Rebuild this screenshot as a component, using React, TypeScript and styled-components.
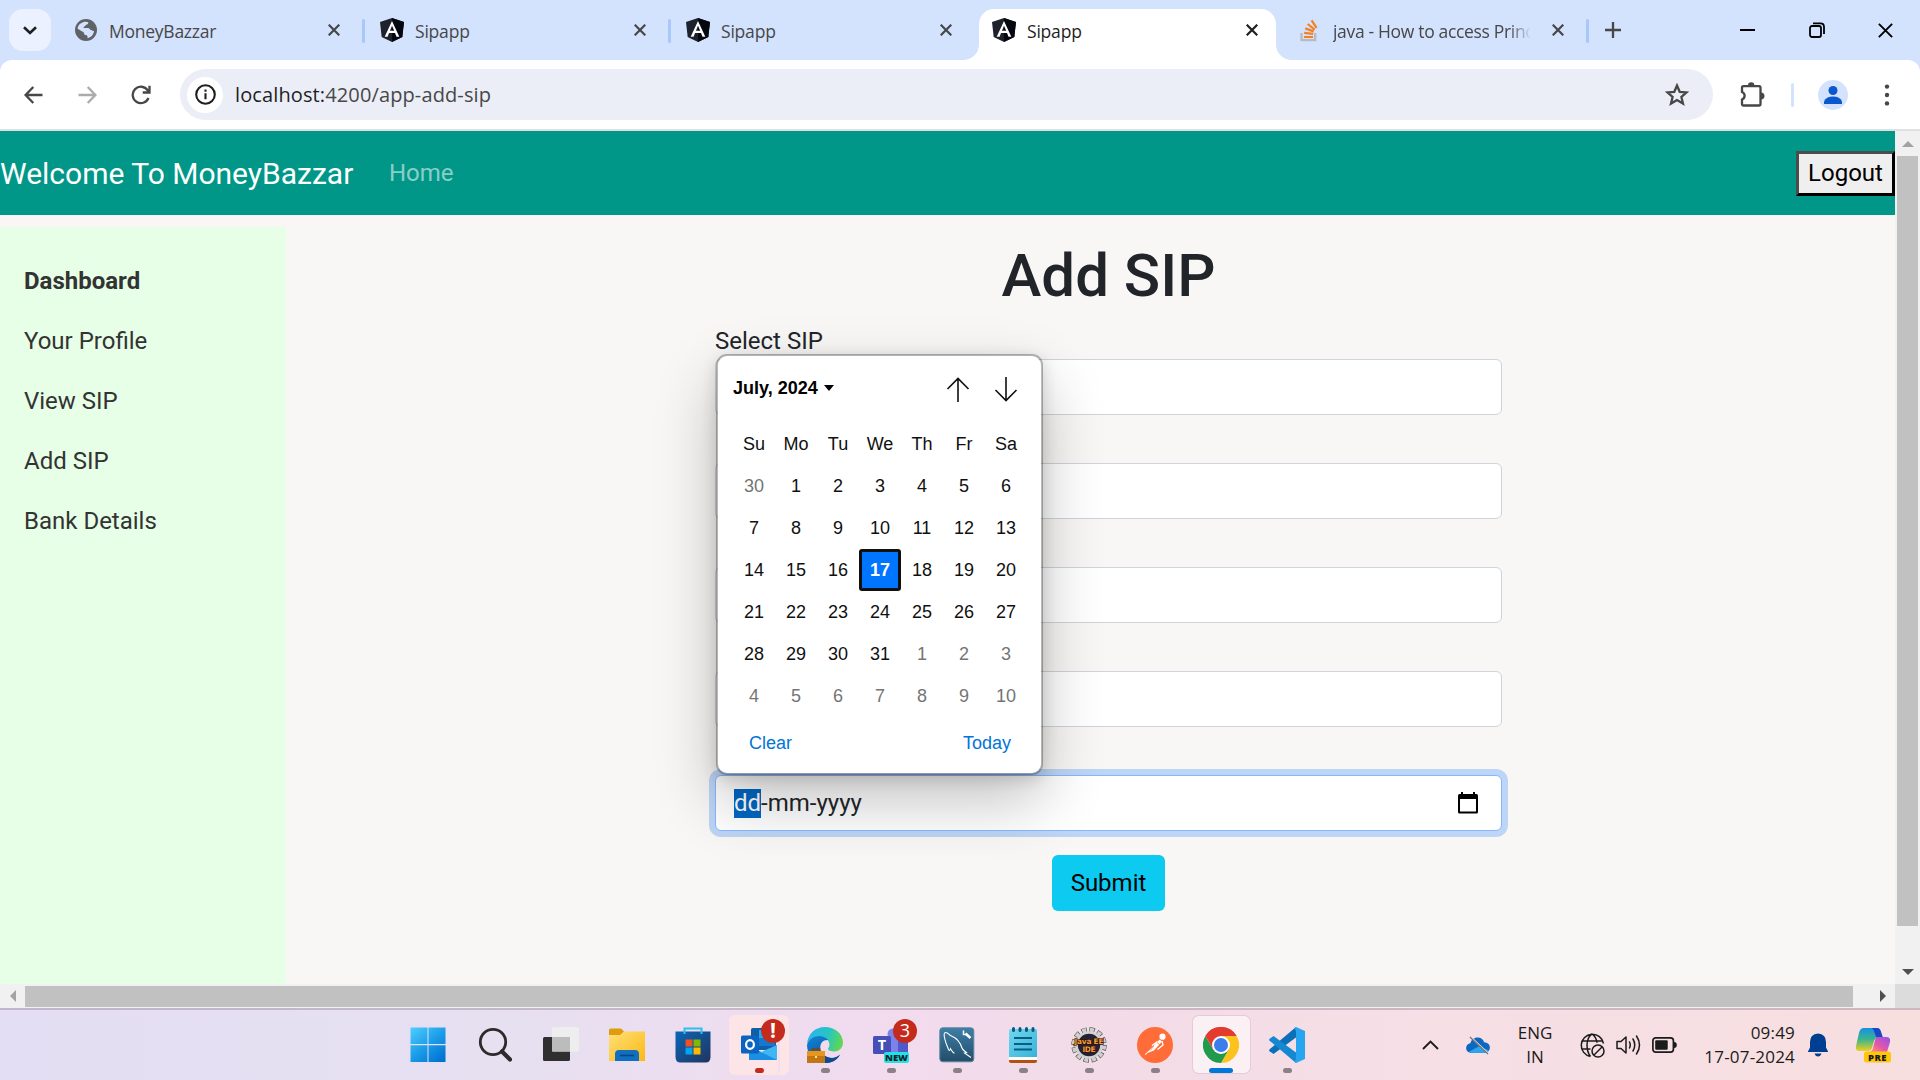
import React from "react";
import styled, { createGlobalStyle, css } from "styled-components";

const Global = createGlobalStyle`
  * { box-sizing: border-box; }
  html, body { margin: 0; padding: 0; overflow: hidden; }
  body { font-family: "Roboto", "Liberation Sans", sans-serif; }
  svg { display: block; flex: none; }
`;

const ui = `"Open Sans", "Noto Sans", sans-serif`;

const Screen = styled.div`
  width: 1920px;
  height: 1080px;
  display: flex;
  flex-direction: column;
  overflow: hidden;
  background: #d3e2fd;
`;

/* ---------- browser tab strip ---------- */
const TabStrip = styled.div`
  height: 60px;
  flex: none;
  display: flex;
  background: #d3e2fd;
`;
const TabSearch = styled.div`
  width: 42px;
  height: 42px;
  margin: 9px 7px 0 9px;
  border-radius: 14px;
  background: #ebf1fe;
  display: grid;
  place-items: center;
`;
const Tab = styled.div<{ $active?: boolean; $line?: boolean }>`
  position: relative;
  width: 306px;
  height: 60px;
  padding: 0 19px 0 16px;
  display: flex;
  align-items: center;
  color: ${(p) => (p.$active ? "#1f1f1f" : "#474747")};
  ${(p) =>
    p.$line &&
    css`
      &::after {
        content: "";
        position: absolute;
        right: -1px;
        top: 19px;
        width: 3px;
        height: 24px;
        border-radius: 2px;
        background: #a8c7fa;
      }
    `}
`;
const ActiveShape = styled.div`
  position: absolute;
  left: 3px;
  right: 6px;
  top: 9px;
  bottom: 0;
  background: #fff;
  border-radius: 15px 15px 0 0;
  &::before,
  &::after {
    content: "";
    position: absolute;
    bottom: 0;
    width: 15px;
    height: 15px;
  }
  &::before {
    left: -15px;
    background: radial-gradient(circle at 0 0, transparent 14.5px, #fff 15px);
  }
  &::after {
    right: -15px;
    background: radial-gradient(circle at 100% 0, transparent 14.5px, #fff 15px);
  }
`;
const TabIcon = styled.div`
  position: relative;
  width: 24px;
  height: 24px;
  margin-right: 11px;
  display: grid;
  place-items: center;
`;
const TabTitle = styled.div<{ $fade?: boolean; $track: number }>`
  position: relative;
  flex: 1;
  margin-right: 14px;
  overflow: hidden;
  white-space: nowrap;
  font: 400 17.5px/26px ${ui};
  letter-spacing: ${(p) => p.$track}px;
  padding-top: 2px;
  ${(p) => p.$fade && css`mask-image: linear-gradient(90deg, #000 88%, transparent 99%);`}
`;
const TabClose = styled.div`
  position: relative;
  width: 22px;
  display: grid;
  place-items: center;
`;
const NewTab = styled.div`
  width: 50px;
  height: 60px;
  display: grid;
  place-items: center;
`;
const WindowButtons = styled.div`
  margin-left: auto;
  display: flex;
  height: 60px;
`;
const WindowButton = styled.div`
  width: 69px;
  height: 60px;
  display: grid;
  place-items: center;
`;

/* ---------- browser toolbar ---------- */
const Toolbar = styled.div`
  height: 71px;
  flex: none;
  background: #fff;
  border-bottom: 2px solid #dfe0e2;
  border-radius: 12px 12px 0 0;
  display: flex;
  align-items: center;
  padding-left: 6px;
`;
const ToolButton = styled.div<{ $w?: number }>`
  width: ${(p) => p.$w ?? 54}px;
  height: 51px;
  display: grid;
  place-items: center;
`;
const AddressBar = styled.div`
  width: 1533px;
  height: 51px;
  margin-left: 12px;
  border-radius: 26px;
  background: #ebeef7;
  display: flex;
  align-items: center;
  padding: 0 24px 0 7px;
`;
const SiteInfo = styled.div`
  width: 36px;
  height: 36px;
  border-radius: 50%;
  background: #fff;
  display: grid;
  place-items: center;
`;
const Url = styled.div`
  flex: 1;
  margin-left: 12px;
  font: 400 20px/28px ${ui};
  letter-spacing: 0.12px;
  color: #474747;
  b { font-weight: 400; color: #1f1f1f; }
`;
const ToolDivider = styled.div`
  width: 3px;
  height: 24px;
  border-radius: 2px;
  background: #d3e2fd;
`;
const Avatar = styled.div`
  width: 30px;
  height: 30px;
  border-radius: 50%;
  background: #d3e2fd;
  display: grid;
  place-items: center;
`;

/* ---------- page ---------- */
const Viewport = styled.div`
  flex: 1;
  min-height: 0;
  display: grid;
  grid-template: 853px 24px / 1895px 25px;
`;
const Page = styled.div`
  background: #f8f7f5;
  display: flex;
  flex-direction: column;
  overflow: hidden;
`;
const Navbar = styled.nav`
  height: 84px;
  flex: none;
  background: #009788;
  display: flex;
  align-items: center;
`;
const Brand = styled.div`
  width: 389px;
  font-size: 30px;
  line-height: 45px;
  color: #fff;
`;
const NavLink = styled.a`
  flex: 1;
  font-size: 24px;
  line-height: 36px;
  color: rgba(255, 255, 255, 0.55);
`;
const Logout = styled.button`
  width: 99px;
  height: 45px;
  padding: 0 0 2px;
  margin-top: 1px;
  font: 400 24px/36px "Roboto", sans-serif;
  color: #000;
  background: #efefef;
  border: 3px solid;
  border-color: #4c4c4c #000 #000 #4c4c4c;
`;
const Columns = styled.div`
  flex: 1;
  display: flex;
  min-height: 0;
`;
const Sidebar = styled.aside`
  width: 286px;
  margin-top: 12px;
  padding: 24px 24px 0;
  background: #e6ffe6;
`;
const SideItem = styled.div<{ $bold?: boolean }>`
  height: 60px;
  line-height: 60px;
  font-size: 24px;
  color: #333;
  font-weight: ${(p) => (p.$bold ? 700 : 400)};
`;
const Form = styled.form`
  width: 787px;
  margin: 24px 0 0 429px;
  display: flex;
  flex-direction: column;
`;
const Title = styled.h1`
  margin: 0 0 12px;
  padding-top: 1px;
  height: 72px;
  font-size: 60px;
  line-height: 72px;
  font-weight: 500;
  text-align: center;
  color: #212529;
`;
const Field = styled.div`
  position: relative;
  margin-bottom: 12px;
`;
const Label = styled.div`
  height: 36px;
  font-size: 24px;
  line-height: 36px;
  color: #212529;
`;
const Input = styled.div<{ $focus?: boolean }>`
  height: 56px;
  border: 1px solid ${(p) => (p.$focus ? "#86b7fe" : "#ced4da")};
  border-radius: 6px;
  background: #fff;
  padding: 0 23px 0 18px;
  display: flex;
  align-items: center;
  justify-content: space-between;
  font-size: 24px;
  color: #212529;
  box-shadow: ${(p) => (p.$focus ? "0 0 0 6px rgba(13,110,253,.25)" : "none")};
`;
const DateText = styled.div`
  line-height: 29px;
`;
const DayPart = styled.span`
  display: inline-block;
  background: #0067c5;
  color: #fff;
`;
const Submit = styled.button`
  align-self: center;
  margin-top: 12px;
  width: 113px;
  height: 56px;
  padding: 0;
  border: 0;
  border-radius: 6px;
  background: #0dcaf0;
  color: #000;
  font: 400 24px/36px "Roboto", sans-serif;
`;

/* ---------- date picker popup ---------- */
const Picker = styled.div`
  position: absolute;
  left: 1px;
  bottom: 56px;
  z-index: 2;
  width: 327px;
  height: 421px;
  padding: 11px 15px 0;
  border: 2px solid rgba(0, 0, 0, 0.27);
  border-radius: 11px;
  background: #fff;
  background-clip: padding-box;
  box-shadow: 0 26px 62px rgba(0, 0, 0, 0.24), 0 4px 16px rgba(0, 0, 0, 0.14);
  font: 400 18px/42px "Liberation Sans", Arial, sans-serif;
  color: #101010;
`;
const PickerHead = styled.div`
  height: 56px;
  margin-right: -4px;
  display: flex;
  align-items: flex-start;
`;
const Month = styled.div`
  flex: 1;
  display: flex;
  align-items: center;
  gap: 6px;
  font-weight: 700;
  color: #000;
`;
const MonthArrow = styled.div`
  width: 48px;
  height: 44px;
  display: grid;
  place-items: center;
`;
const Days = styled.div`
  display: grid;
  grid-template-columns: repeat(7, 42px);
  grid-auto-rows: 42px;
  text-align: center;
`;
const Day = styled.div<{ $dim?: boolean; $selected?: boolean }>`
  color: ${(p) => (p.$dim ? "#757575" : "#101010")};
  ${(p) =>
    p.$selected &&
    css`
      color: #fff;
      font-weight: 700;
      line-height: 36px;
      background: #0075ff;
      border: 3px solid #101010;
      border-radius: 3px;
    `}
`;
const PickerFoot = styled.div`
  display: flex;
  justify-content: space-between;
  padding: 6px 15px 0 16px;
  line-height: 40px;
  color: #0075d7;
`;

/* ---------- scrollbars ---------- */
const VBar = styled.div`
  background: #f1f1f1;
  display: flex;
  flex-direction: column;
  align-items: center;
`;
const HBar = styled.div`
  background: #f1f1f1;
  display: flex;
  align-items: center;
`;
const ScrollEnd = styled.div`
  width: 25px;
  height: 25px;
  display: grid;
  place-items: center;
`;
const VThumb = styled.div`
  width: 21px;
  height: 770px;
  margin-bottom: 33px;
  background: #c1c1c1;
`;
const HThumb = styled.div`
  width: 1828px;
  height: 21px;
  margin-right: 17px;
  background: #c1c1c1;
`;
const Corner = styled.div`
  background: #dcdcdc;
`;

/* ---------- taskbar ---------- */
const Taskbar = styled.div`
  height: 72px;
  flex: none;
  border-top: 2px solid rgba(120, 100, 120, 0.32);
  background: linear-gradient(90deg, #e3def3 0, #e6e0f1 500px, #f1dbee 860px, #f3dce6 1150px, #f6dfe5 1450px, #f7dfe0 1920px);
  display: flex;
  align-items: center;
  padding-left: 396px;
`;
const TaskApp = styled.div`
  position: relative;
  width: 66px;
  height: 70px;
  display: grid;
  place-items: center;
  padding-bottom: 1px;
`;
const Tile = styled.div<{ $alert?: boolean }>`
  position: relative;
  width: ${(p) => (p.$alert ? 60 : 57)}px;
  height: ${(p) => (p.$alert ? 60 : 57)}px;
  border-radius: 6px;
  display: grid;
  place-items: center;
  background: ${(p) => (p.$alert ? "#fde5e7" : "rgba(255,255,255,.6)")};
  box-shadow: ${(p) => (p.$alert ? "none" : "0 0 0 1px rgba(160,120,140,.18)")};
  ${(p) =>
    p.$alert &&
    css`
      &::before {
        content: "";
        position: absolute;
        inset: 0 9px 0 0;
        border-right: 2px solid #f4dcea;
        border-radius: 6px;
      }
    `}
`;
const Mark = styled.div<{ $color: string; $w: number }>`
  position: absolute;
  bottom: 7px;
  left: 50%;
  width: ${(p) => p.$w}px;
  height: 5px;
  margin-left: ${(p) => -p.$w / 2}px;
  border-radius: 3px;
  background: ${(p) => p.$color};
`;
const Badge = styled.div<{ $bold?: boolean }>`
  position: absolute;
  left: 35px;
  top: 9px;
  width: 24px;
  height: 24px;
  border-radius: 50%;
  background: #c42b1c;
  color: #fff;
  text-align: center;
  font: ${(p) => (p.$bold ? "700 21px/22px" : "400 18px/23px")} ${ui};
`;
const Tray = styled.div`
  margin-left: auto;
  height: 70px;
  display: flex;
  align-items: center;
  color: #1b1b1b;
  font: 400 17px/24px ${ui};
`;
const TrayItem = styled.div<{ $w: number; $left?: number; $right?: number }>`
  width: ${(p) => p.$w}px;
  margin-left: ${(p) => p.$left ?? 0}px;
  margin-right: ${(p) => p.$right ?? 0}px;
  display: grid;
  place-items: center;
`;
const Lang = styled.div`
  width: 90px;
  text-align: center;
`;
const Clock = styled.div`
  width: 118px;
  text-align: right;
  letter-spacing: 0.2px;
`;

/* ---------- drawings ---------- */
const Cross = ({ s = 12, w = 2.2, c = "#474747" }) => (
  <svg width={s} height={s} viewBox="0 0 12 12" fill="none" stroke={c} strokeWidth={w}>
    <path d="M.7.7 11.3 11.3M11.3.7.7 11.3" />
  </svg>
);
const Angular = () => (
  <svg width="24" height="24" viewBox="0 0 24 24">
    <path d="M12 0 24 4 22.3 19 12 24 1.7 19 0 4Z" fill="#1d222c" />
    <path d="M12 0 24 4 22.3 19 12 24Z" fill="#05080f" />
    <path d="M12 3 4.7 18.7h2.9L9 15h6l1.500 3.700h2.800ZM12 7.700 14.200 12.800H9.900Z" fill="#fff" fillRule="evenodd" />
  </svg>
);
const Earth = () => (
  <svg width="22" height="22" viewBox="0 0 22 22">
    <circle cx="11" cy="11" r="11" fill="#5f6368" />
    <path d="M8 3.200c2-.8 4-.6 5.300 0 .2 1.500-.8 2.500-2.300 2.500-.3 1.800-2.500 1.300-2.500 3.200h4.600c1.500 0 1.700 2 3 2.200 1.300.1 1.500 1.200 3 1-.5 3.500-3 6.500-6.600 7.200.4-1.700-.3-3-1.900-3.200-1.900-.3-1.200-2.600-2.700-3.400C5.500 11.400 4 10.400 2.500 9.400 3.100 6.300 5 4.200 8 3.200Z" fill="#d3e2fd" />
    <path d="M13.500 3.500c3.200 1 5.200 3.600 5.700 6.500-1.800.2-2.300-1.300-3.700-1.500-1.700-.3-2.500-1.600-1.300-2.700.6-.6-.6-1.400-.7-2.300Z" fill="#5f6368" />
  </svg>
);
const StackOverflow = () => (
  <svg width="20" height="24" viewBox="0 0 20 24" fill="none">
    <path d="M1.500 15v7.200h13.700V15" stroke="#bcbbbb" strokeWidth="2.300" />
    <g stroke="#f48024" strokeWidth="2.200">
      <path d="M4 19h9M4.200 14.800l9 1M5.200 10.400l8.500 3M7.700 6l7 5.600M11.600 2.300l5 7.500" />
    </g>
  </svg>
);
const Calendar = () => (
  <svg width="20" height="22" viewBox="0 0 20 22">
    <path d="M3 0h2v2h10V0h2v2h1.500Q20 2 20 4v16q0 1.500-1.500 1.500h-17Q0 21.500 0 20V4q0-2 1.500-2H3ZM2 7v12.500h16V7Z" fill="#000" fillRule="evenodd" />
  </svg>
);
const Tri = ({ d, c }: { d: string; c: string }) => (
  <svg width="12" height="12" viewBox="0 0 12 12">
    <path d={d} fill={c} />
  </svg>
);

const WindowsSvg = styled.svg`
  margin-right: 3px;
`;
const Windows = () => (
  <WindowsSvg width="36" height="36" viewBox="0 0 36 36">
    <defs>
      <linearGradient id="win" gradientUnits="userSpaceOnUse" x1="0" y1="0" x2="30" y2="36">
        <stop stopColor="#4fd0ff" /><stop offset=".55" stopColor="#1a9be8" /><stop offset="1" stopColor="#0072d0" />
      </linearGradient>
    </defs>
    <path d="M1 .5h16.500V17H.5V1ZM18.500.5h17V17h-17ZM.5 18.300h17V35H.5ZM18.500 18.300h17V35h-17Z" fill="url(#win)" />
  </WindowsSvg>
);
const Search = () => (
  <svg width="34" height="36" viewBox="0 0 34 36" fill="none" stroke="#2b2b2b">
    <circle cx="15" cy="15" r="12.700" strokeWidth="2.800" />
    <path d="m24 24.500 8 8" strokeWidth="4.200" strokeLinecap="round" />
  </svg>
);
const TaskView = () => (
  <svg width="36" height="36" viewBox="0 0 36 36">
    <rect x="0" y="10" width="27" height="24" rx="1.500" fill="#2f2f2f" />
    <rect x="9" y="0" width="27" height="24.500" rx="1.500" fill="#efeeee" />
    <path d="M9 10h18v14.500H9Z" fill="#bdbcbd" />
  </svg>
);
const Folder = () => (
  <svg width="36" height="36" viewBox="0 0 36 36">
    <defs><linearGradient id="fo" x2="1" y2="1"><stop stopColor="#ffe07a" /><stop offset="1" stopColor="#fdb813" /></linearGradient></defs>
    <path d="M0 3q0-1.500 1.500-1.500H12l3 3-3 6H0Z" fill="#df9c0c" />
    <path d="M0 8h11l4-3.500h21V34H0Z" fill="url(#fo)" />
    <path d="M6 34V27q0-4 4-4h16q4 0 4 4v7Z" fill="#0f6fc0" />
    <path d="M11 28.500h14" stroke="#07457f" strokeWidth="1.600" />
  </svg>
);
const Store = () => (
  <svg width="36" height="36" viewBox="0 0 36 36">
    <defs><linearGradient id="st" x2="1" y2="1"><stop stopColor="#0a66b8" /><stop offset="1" stopColor="#20345f" /></linearGradient></defs>
    <path d="M.5 4.500h35V30q0 5.500-5 5.500h-25q-5 0-5-5.500Z" fill="url(#st)" />
    <path d="M9.500 7V1.500h17V7" stroke="#2cc0f0" strokeWidth="2" fill="none" />
    <path d="M10.500 12.500h7v7h-7Z" fill="#f25022" /><path d="M18.500 12.500h7v7h-7Z" fill="#7fba00" />
    <path d="M10.500 20.500h7v7h-7Z" fill="#00a4ef" /><path d="M18.500 20.500h7v7h-7Z" fill="#ffb900" />
  </svg>
);
const Outlook = () => (
  <svg width="36" height="36" viewBox="0 0 36 36">
    <rect x="10" y="1" width="25" height="22" rx="1.500" fill="#0f5ea8" />
    <path d="M18 3h8v8h-8Z" fill="#28a8ea" /><path d="M26 11h8v8h-8ZM18 11h8v8h-8Z" fill="#1478cf" />
    <path d="M8 18 22 26 36 18V33H8Z" fill="#1a8fe3" /><path d="M36 18v15L20 25Z" fill="#3fb5f3" />
    <rect x="0" y="8.500" width="18" height="18" rx="1.500" fill="#0b64c0" />
    <ellipse cx="9" cy="17.500" rx="3.900" ry="4.300" fill="none" stroke="#fff" strokeWidth="2.200" />
  </svg>
);
const Edge = () => (
  <svg width="36" height="36" viewBox="0 0 36 36">
    <defs>
      <linearGradient id="e1" x1="0" y1=".3" x2="1" y2=".5"><stop stopColor="#2ab4f0" /><stop offset=".55" stopColor="#26c4c6" /><stop offset="1" stopColor="#62d84e" /></linearGradient>
      <linearGradient id="e2" x2=".6" y2="1"><stop stopColor="#1187d8" /><stop offset="1" stopColor="#0b4a9c" /></linearGradient>
    </defs>
    <path d="M0 17C1 6.500 8.500 0 18 0c10 0 18 7 18 15.500 0 6-4.500 9-9 9-3.500 0-6-1-6-2.500 0-1.300 1.400-1.700 1.400-4.300C22.400 13 18 9.500 12 9.500 6 9.500 2 12.500 0 17Z" fill="url(#e1)" />
    <path d="M0 18c1.500-5.500 6-9 12-9 4 0 7.500 1.700 9.300 4-5-.5-8 2.700-8 7.500 0 6 5 10.500 11.700 10.500 3 0 5.500-1 8-3-3 5-8 8-15 8C8 36 0 28 0 18Z" fill="url(#e2)" />
    <path d="M13.800 22c1 5.500 5.700 9 11.200 9 3 0 5.500-1.500 8-3.500-3 5.500-8 8.500-15 8.500Z" fill="#104a93" />
    <rect x="0" y="24" width="18" height="12" fill="#c27613" /><path d="M0 24h18v5H0Z" fill="#e9951c" />
    <path d="M5.500 24v-2h7v2" stroke="#7a4510" strokeWidth="1.500" fill="none" /><path d="M8 29h2v2H8Z" fill="#ffe08a" />
  </svg>
);
const Teams = () => (
  <svg width="36" height="36" viewBox="0 0 36 36">
    <circle cx="20" cy="7" r="5.500" fill="#7b83eb" />
    <rect x="14" y="12" width="13" height="22" rx="3" fill="#7b83eb" />
    <rect x="25" y="12" width="10" height="16" rx="3" fill="#5059c9" />
    <rect x="0" y="9" width="18" height="18" rx="1.500" fill="#464eb8" />
    <text x="9" y="23" textAnchor="middle" fontFamily="Open Sans" fontWeight="700" fontSize="14.500" fill="#fff">T</text>
    <rect x="11" y="25" width="25" height="11" rx="2" fill="#27e0e4" />
    <text x="23.500" y="34" textAnchor="middle" fontFamily="Open Sans" fontWeight="800" fontSize="9.500" fill="#06272b">NEW</text>
  </svg>
);
const MySql = () => (
  <svg width="36" height="36" viewBox="0 0 36 36">
    <defs><linearGradient id="my" x2="0" y2="1"><stop stopColor="#3e7ea8" /><stop offset="1" stopColor="#234d69" /></linearGradient></defs>
    <rect x=".8" y=".8" width="34" height="34" rx="3" fill="url(#my)" stroke="#5d87a0" strokeWidth="1" />
    <path d="M6 12.500C5 9 4.500 5.500 6.500 5.500c3 0 3.500 2.500 6 3.500 6 2.500 9 7 10.500 12 .6 2 2.500 3 4.500 4.500L25.500 26l6.500 4.500M6 12.500c.7 4 2 5.500 3.500 10 .8 1.500 1.600 1 2-.8 1.500 2.300 1.600 3.800 4 4.500" stroke="#fff" strokeWidth="1.100" fill="none" />
    <path d="m26.500 6.500 5 4.500" stroke="#fff" strokeWidth="2.600" fill="none" />
    <path d="M24.500 3.500v4h4" stroke="#fff" strokeWidth="1.500" fill="none" />
  </svg>
);
const Notepad = () => (
  <svg width="30" height="36" viewBox="0 0 30 36">
    <defs><linearGradient id="no" x2="1" y2="1"><stop stopColor="#72d8ef" /><stop offset="1" stopColor="#38b2d8" /></linearGradient></defs>
    <path d="M1 31h28v3q0 2-2 2H3q-2 0-2-2Z" fill="#b4510f" /><path d="M1 29h28v4H1Z" fill="#fff" />
    <path d="M1 4q0-2 2-2h24q2 0 2 2v26H1Z" fill="url(#no)" />
    <path d="M6 11h18M6 17h18M6 22.500h18" stroke="#075e84" strokeWidth="2" />
    <path d="M5.500 1.500v2M12 1.500v2M18.500 1.500v2M25 1.500v2" stroke="#0a5b80" strokeWidth="3" strokeLinecap="round" />
  </svg>
);
const JavaIde = () => (
  <svg width="36" height="36" viewBox="0 0 36 36">
    <circle cx="18" cy="18" r="15.200" fill="none" stroke="#4a4a4a" strokeWidth="5" strokeDasharray="5.200 2.760" />
    <circle cx="18" cy="18" r="15.200" fill="none" stroke="#cfcfcf" strokeWidth="4" strokeDasharray="4 3.960" strokeDashoffset="-.6" />
    <circle cx="18" cy="18" r="12.500" fill="#272033" stroke="#d2d2d2" strokeWidth="2.600" />
    <text x="18" y="17" textAnchor="middle" fontFamily="DejaVu Sans" fontWeight="700" fontSize="7.500" textLength="29" fill="#f59a3c" stroke="#2a1608" strokeWidth="1.300" paintOrder="stroke">Java EE</text>
    <text x="18" y="24.500" textAnchor="middle" fontFamily="DejaVu Sans" fontWeight="700" fontSize="7.500" textLength="13" fill="#f59a3c" stroke="#2a1608" strokeWidth="1" paintOrder="stroke">IDE</text>
  </svg>
);
const Postman = () => (
  <svg width="36" height="36" viewBox="0 0 36 36">
    <circle cx="18" cy="18" r="18" fill="#ff6c37" />
    <circle cx="25.500" cy="9.700" r="3.100" fill="#fff" />
    <path d="M22.500 12.500 25 14.500 17 23.500 10.500 26 8.500 28 7.800 27.300 11.500 24Z" fill="#fff" />
    <path d="m25 14 1 4-5.500 4.500M20.500 14.500 15 18.500" stroke="#fff" strokeWidth="1.300" fill="none" />
    <path d="m13 23.500 4-4.500M20 15.500l3 2.500" stroke="#ff6c37" strokeWidth=".7" />
  </svg>
);
const ChromeLogo = () => (
  <svg width="36" height="36" viewBox="0 0 36 36">
    <path d="M18 18 2.400 9A18 18 0 0 1 33.600 9Z" fill="#e33b2e" />
    <path d="M18 9H33.600A18 18 0 0 1 18 36L25.800 22.500Z" fill="#fcc31e" />
    <path d="M10.200 22.500 2.400 9A18 18 0 0 0 18 36l7.800-13.500Z" fill="#219a4c" />
    <path d="M18 9h15.600A18 18 0 0 0 2.400 9l7.800 13.500Z" fill="#e33b2e" />
    <circle cx="18" cy="18" r="9" fill="#fff" /><circle cx="18" cy="18" r="7" fill="#3b7ded" />
  </svg>
);
const VsCode = () => (
  <svg width="36" height="36" viewBox="0 0 36 36">
    <path d="M27 0v10.500L4.500 27 .6 24.300q-1-1 0-2Z" fill="#0b70b8" />
    <path d="M27 36V25.500L4.500 9 .6 11.700q-1 1 0 2Z" fill="#1489d2" />
    <path d="m27 0 9 4v28l-9 4-1.500-1 1.500-3V4l-1.500-3Z" fill="#27a5ee" />
  </svg>
);
const Cloud = () => (
  <svg width="24" height="19" viewBox="0 0 25 20">
    <path d="M5.500 17.500C2 17.500 0 15.200 0 12.500 0 10 2 8 4.500 7.700 5.500 4 8.500 1.700 12 1.700c3.500 0 6 2 7 4.800 3.500.2 6 2.500 6 5.500 0 3-2.200 5.500-5.500 5.500Z" fill="#0a67c2" />
    <path d="M3 16.500 13 11l11 4q-1.500 2.500-4.500 2.500h-14Q4 17.500 3 16.500Z" fill="#29a6ec" />
    <path d="m5 1 19 18" stroke="#f6dfe5" strokeWidth="1.500" /><path d="m4 1 19 18" stroke="#76767a" strokeWidth="1.300" />
  </svg>
);
const NoNet = () => (
  <svg width="25" height="25" viewBox="0 0 25 25" fill="none" stroke="#1b1b1b" strokeWidth="1.500">
    <path d="M10.500 23.500A11.200 11.200 0 1 1 23.500 10.500M12 .8C8 4 7 8 7 12s.7 8 3.500 11.500M12 .8c3.300 2.500 4.700 5.500 5 9M2 8h21M2 16h8.500" />
    <circle cx="18" cy="18" r="6" /><path d="m14 22 8-8" />
  </svg>
);
const Speaker = () => (
  <svg width="25" height="22" viewBox="0 0 25 22" fill="none" stroke="#1b1b1b" strokeWidth="1.500" strokeLinejoin="round" strokeLinecap="round">
    <path d="M1 7.500h4L10 3v16l-5-4.500H1ZM13.500 8q1.500 3 0 6M17 5q3.500 6 0 12M20.500 2q6 9 0 18" />
  </svg>
);
const Battery = () => (
  <svg width="25" height="16" viewBox="0 0 25 16">
    <rect x=".9" y=".9" width="20.500" height="14.200" rx="2.800" fill="none" stroke="#1b1b1b" strokeWidth="1.700" />
    <rect x="3.200" y="3.300" width="12.500" height="9.400" rx="1" fill="#1b1b1b" /><path d="M22 5q2.800 0 2.800 3T22 11Z" fill="#1b1b1b" />
  </svg>
);
const Bell = () => (
  <svg width="20" height="24" viewBox="0 0 20 24" fill="#003e92">
    <path d="M10 .5q8 .5 8 8.500v5.500l2 4v.5H0v-.5l2-4V9Q2 1 10 .5ZM6.500 20.500h7q-1 3-3.500 3t-3.500-3Z" />
  </svg>
);
const Copilot = () => (
  <svg width="36" height="36" viewBox="0 0 36 36">
    <defs>
      <linearGradient id="c1" x2="0" y2="1"><stop stopColor="#1591e4" /><stop offset=".5" stopColor="#3cb58b" /><stop offset="1" stopColor="#f0cf20" /></linearGradient>
      <linearGradient id="c2" x1="1" x2="0" y2="1"><stop stopColor="#8f50ef" /><stop offset=".55" stopColor="#e457a8" /><stop offset="1" stopColor="#ff9a62" /></linearGradient>
    </defs>
    <path d="M9 1h13q3 0 4 4l2 6h-5q-3 0-4 3l-2 7q-1 3-4 3H4q-4 0-3-5L4 6q1-5 5-5Z" fill="url(#c1)" />
    <path d="M17 1h5q3 0 4 4l2 6h-4q-3 0-4-4-1-4-3-6Z" fill="#1a47c8" />
    <path d="M23 10h8q5 0 4 5l-3 10H14q3 0 4-4l2-8q1-3 3-3Z" fill="url(#c2)" />
    <rect x="9" y="24.500" width="27" height="11" rx="2.500" fill="#ffc60a" />
    <text x="22.500" y="33.500" textAnchor="middle" fontFamily="Open Sans" fontWeight="800" fontSize="9.500" letterSpacing=".5" fill="#1b1b1b">PRE</text>
  </svg>
);

type TabData = { title: string; icon: React.ReactNode; active?: boolean; line?: boolean; fade?: boolean; track: number };
const tabs: TabData[] = [
  { title: "MoneyBazzar", icon: <Earth />, line: true, track: -0.25 },
  { title: "Sipapp", icon: <Angular />, line: true, track: -0.2 },
  { title: "Sipapp", icon: <Angular />, track: -0.2 },
  { title: "Sipapp", icon: <Angular />, active: true, track: -0.2 },
  { title: "java - How to access Princ", icon: <StackOverflow />, line: true, fade: true, track: -0.33 },
];

const weekdays = ["Su", "Mo", "Tu", "We", "Th", "Fr", "Sa"];
const days = Array.from({ length: 42 }, (_, i) => {
  const n = i === 0 ? 30 : i <= 31 ? i : i - 31;
  return { n, dim: i === 0 || i > 31, selected: i === 17 };
});

const apps: { icon: React.ReactNode; mark?: "idle" | "active" | "alert"; badge?: string }[] = [
  { icon: <Windows /> },
  { icon: <Search /> },
  { icon: <TaskView /> },
  { icon: <Folder /> },
  { icon: <Store /> },
  { icon: <Outlook />, mark: "alert", badge: "!" },
  { icon: <Edge />, mark: "idle" },
  { icon: <Teams />, mark: "idle", badge: "3" },
  { icon: <MySql />, mark: "idle" },
  { icon: <Notepad />, mark: "idle" },
  { icon: <JavaIde />, mark: "idle" },
  { icon: <Postman />, mark: "idle" },
  { icon: <ChromeLogo />, mark: "active" },
  { icon: <VsCode />, mark: "idle" },
];
const markColor = { idle: "#8b7f88", active: "#0078d8", alert: "#c42b1c" };

export default function App() {
  return (
    <Screen>
      <Global />
      <TabStrip>
        <TabSearch>
          <svg width="14" height="9" viewBox="0 0 14 9" fill="none" stroke="#1f1f1f" strokeWidth="2.600"><path d="m1 1.200 6 5.800 6-5.800" /></svg>
        </TabSearch>
        {tabs.map((t, i) => (
          <Tab key={i} $active={t.active} $line={t.line}>
            {t.active && <ActiveShape />}
            <TabIcon>{t.icon}</TabIcon>
            <TabTitle $fade={t.fade} $track={t.track}>{t.title}</TabTitle>
            <TabClose><Cross c={t.active ? "#1f1f1f" : "#474747"} /></TabClose>
          </Tab>
        ))}
        <NewTab>
          <svg width="16" height="16" viewBox="0 0 16 16" stroke="#474747" strokeWidth="2.300"><path d="M8 0v16M0 8h16" /></svg>
        </NewTab>
        <WindowButtons>
          <WindowButton><svg width="15" height="2" viewBox="0 0 15 2"><path d="M0 0h15v2H0Z" /></svg></WindowButton>
          <WindowButton>
            <svg width="16" height="16" viewBox="0 0 16 16" fill="none" stroke="#000" strokeWidth="1.800"><rect x="1" y="4" width="11" height="11" rx="2" /><path d="M4 1.300h7.500q3.500 0 3.500 3.500V12" /></svg>
          </WindowButton>
          <WindowButton><Cross s={15} w={1.5} c="#000" /></WindowButton>
        </WindowButtons>
      </TabStrip>

      <Toolbar>
        <ToolButton>
          <svg width="19" height="18" viewBox="0 0 19 18" fill="none" stroke="#474747" strokeWidth="2.300"><path d="M18.500 9H2M9.300 1 1.600 9l7.700 8" /></svg>
        </ToolButton>
        <ToolButton>
          <svg width="19" height="18" viewBox="0 0 19 18" fill="none" stroke="#ababab" strokeWidth="2.300"><path d="M.5 9H17M9.700 1l7.700 8-7.700 8" /></svg>
        </ToolButton>
        <ToolButton>
          <svg width="20" height="20" viewBox="0 0 20 20" fill="none" stroke="#474747" strokeWidth="2.300"><path d="M17.500 13A8.200 8.200 0 1 1 16.700 5.300L18.500 7.500M18.500.8v6.700h-6.800" /></svg>
        </ToolButton>
        <AddressBar>
          <SiteInfo>
            <svg width="21" height="21" viewBox="0 0 21 21" fill="none" stroke="#1f1f1f" strokeWidth="2.100"><circle cx="10.500" cy="10.500" r="9.300" /><path d="M10.500 9.300v6M10.500 5.500v2.200" /></svg>
          </SiteInfo>
          <Url><b>localhost:</b>4200/app-add-sip</Url>
          <svg width="24" height="23" viewBox="0 0 24 23" fill="none" stroke="#474747" strokeWidth="2.300"><path d="m12 2.500 2.700 6.300 6.900.6-5.200 4.500 1.600 6.700-6-3.600-6 3.600 1.600-6.700-5.200-4.500 6.900-.6Z" /></svg>
        </AddressBar>
        <ToolButton $w={78}>
          <svg width="26" height="26" viewBox="0 0 26 26"><path d="M4.500 4.200H20q1.500 0 1.500 1.500V22q0 1.500-1.500 1.500H4.500Q3 23.500 3 22v-4.500c3.500-1.500 3.500-6 0-7.500V5.700q0-1.500 1.500-1.500Z" fill="none" stroke="#474747" strokeWidth="2.300" /><path d="M9 3.500a3.200 3.200 0 0 1 6.400 0ZM22 10.500a3.500 3.500 0 0 1 0 7Z" fill="#474747" /></svg>
        </ToolButton>
        <ToolDivider />
        <ToolButton $w={78}>
          <Avatar><svg width="18" height="18" viewBox="0 0 18 18" fill="#0b57d0"><circle cx="9" cy="4.500" r="4.500" /><path d="M0 18v-2.500Q2 10.500 9 10.500t9 5V18Z" /></svg></Avatar>
        </ToolButton>
        <ToolButton $w={30}>
          <svg width="6" height="22" viewBox="0 0 6 22" fill="#474747"><circle cx="3" cy="2.600" r="2.200" /><circle cx="3" cy="11" r="2.200" /><circle cx="3" cy="19.400" r="2.200" /></svg>
        </ToolButton>
      </Toolbar>

      <Viewport>
        <Page>
          <Navbar>
            <Brand>Welcome To MoneyBazzar</Brand>
            <NavLink>Home</NavLink>
            <Logout type="button">Logout</Logout>
          </Navbar>
          <Columns>
            <Sidebar>
              <SideItem $bold>Dashboard</SideItem>
              <SideItem>Your Profile</SideItem>
              <SideItem>View SIP</SideItem>
              <SideItem>Add SIP</SideItem>
              <SideItem>Bank Details</SideItem>
            </Sidebar>
            <Form>
              <Title>Add SIP</Title>
              <Field><Label>Select SIP</Label><Input /></Field>
              <Field><Label /><Input /></Field>
              <Field><Label /><Input /></Field>
              <Field><Label /><Input /></Field>
              <Field>
                <Label />
                <Input $focus>
                  <DateText><DayPart>dd</DayPart>-mm-yyyy</DateText>
                  <Calendar />
                </Input>
                <Picker>
                  <PickerHead>
                    <Month>
                      July, 2024
                      <svg width="10" height="6" viewBox="0 0 10 6"><path d="M0 0h10L5 6Z" /></svg>
                    </Month>
                    <MonthArrow>
                      <svg width="24" height="25" viewBox="0 0 24 25" fill="none" stroke="#101010" strokeWidth="1.600"><path d="M12 25V1.500M1.500 12 12 1.500 22.500 12" /></svg>
                    </MonthArrow>
                    <MonthArrow>
                      <svg width="24" height="25" viewBox="0 0 24 25" fill="none" stroke="#101010" strokeWidth="1.600"><path d="M12 0v23.500M1.500 13 12 23.500 22.500 13" /></svg>
                    </MonthArrow>
                  </PickerHead>
                  <Days>
                    {weekdays.map((d) => <Day key={d}>{d}</Day>)}
                    {days.map((d, i) => <Day key={i} $dim={d.dim} $selected={d.selected}>{d.n}</Day>)}
                  </Days>
                  <PickerFoot><span>Clear</span><span>Today</span></PickerFoot>
                </Picker>
              </Field>
              <Submit type="button">Submit</Submit>
            </Form>
          </Columns>
        </Page>
        <VBar>
          <ScrollEnd><Tri d="M0 9h12L6 3Z" c="#a3a3a3" /></ScrollEnd>
          <VThumb />
          <ScrollEnd><Tri d="M0 3h12L6 9Z" c="#505050" /></ScrollEnd>
        </VBar>
        <HBar>
          <ScrollEnd><Tri d="M9 0v12L3 6Z" c="#a3a3a3" /></ScrollEnd>
          <HThumb />
          <ScrollEnd><Tri d="M3 0v12L9 6Z" c="#505050" /></ScrollEnd>
        </HBar>
        <Corner />
      </Viewport>

      <Taskbar>
        {apps.map((a, i) => (
          <TaskApp key={i}>
            {a.mark === "alert" || a.mark === "active" ? <Tile $alert={a.mark === "alert"}>{a.icon}</Tile> : a.icon}
            {a.badge && <Badge $bold={a.mark === "alert"}>{a.badge}</Badge>}
            {a.mark && <Mark $color={markColor[a.mark]} $w={a.mark === "active" ? 24 : 9} />}
          </TaskApp>
        ))}
        <Tray>
          <TrayItem $w={24}>
            <svg width="17" height="10" viewBox="0 0 17 10" fill="none" stroke="#1b1b1b" strokeWidth="1.800"><path d="m1 9 7.500-7.500L16 9" /></svg>
          </TrayItem>
          <TrayItem $w={24} $left={24}><Cloud /></TrayItem>
          <Lang>ENG<br />IN</Lang>
          <TrayItem $w={25}><NoNet /></TrayItem>
          <TrayItem $w={47}><Speaker /></TrayItem>
          <TrayItem $w={25}><Battery /></TrayItem>
          <Clock>09:49<br />17-07-2024</Clock>
          <TrayItem $w={46}><Bell /></TrayItem>
          <TrayItem $w={63} $right={16}><Copilot /></TrayItem>
        </Tray>
      </Taskbar>
    </Screen>
  );
}
